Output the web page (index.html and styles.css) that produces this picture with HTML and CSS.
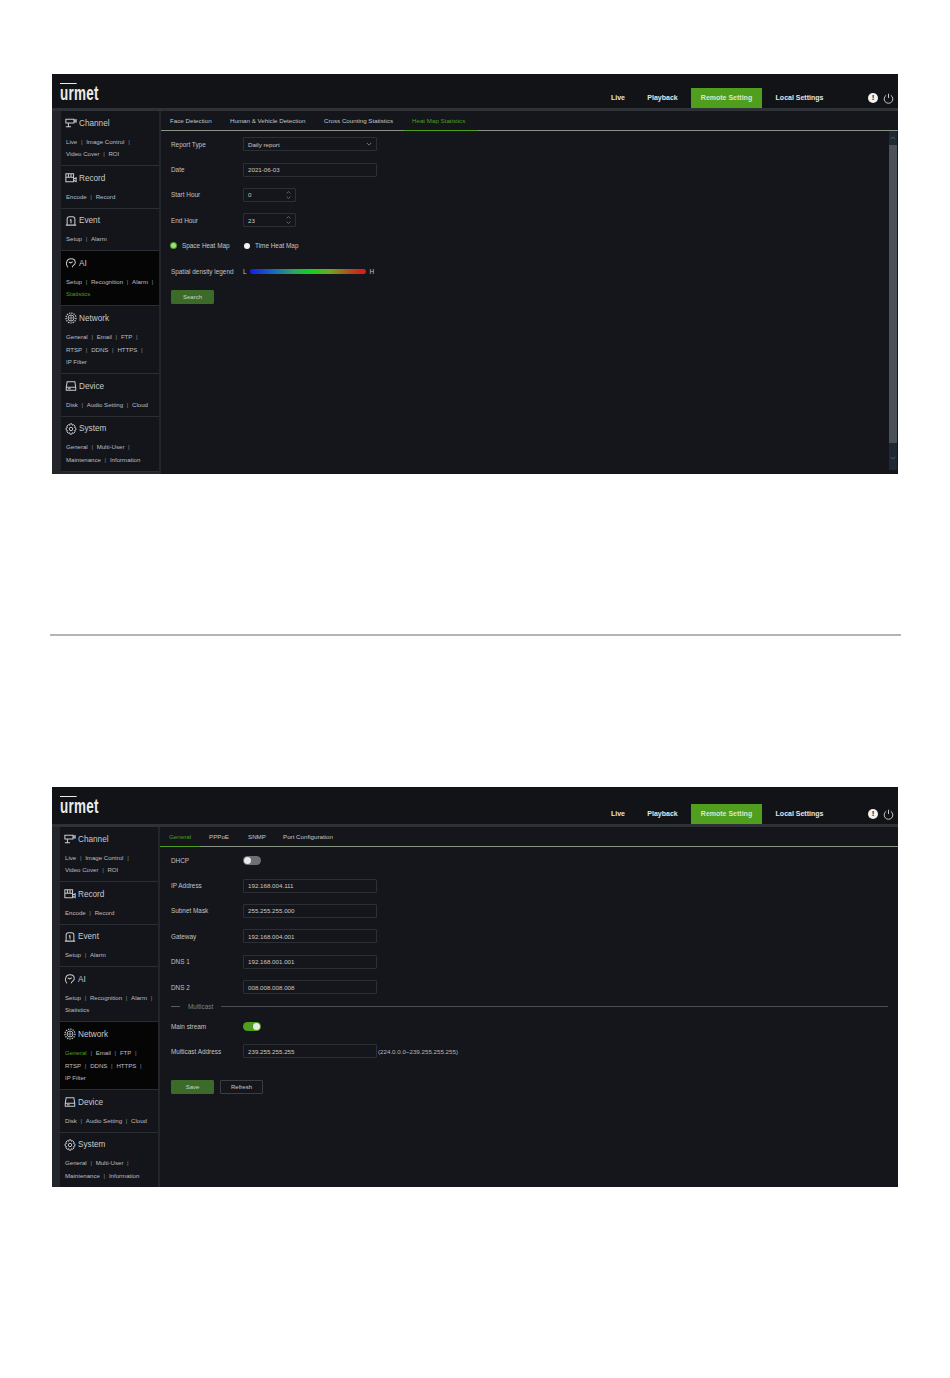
FILE: index.html
```html
<!DOCTYPE html>
<html lang="en">
<head>
<meta charset="utf-8">
<title>Urmet</title>
<link rel="stylesheet" href="styles.css">
</head>
<body>
<svg class="defs" width="0" height="0">
  <defs>
    <symbol id="i-channel" viewBox="0 0 14 12"><path d="M1 1.500h9.500v4.500H1zM10.500 3l2.500-.8v2.800l-2.500-.8M4 6v4.500M1 10.500h6" fill="none" stroke="currentColor" stroke-width="1.200"/></symbol>
    <symbol id="i-record" viewBox="0 0 14 12"><path d="M1 1h9v9.500H1zM1 5.200h9M4 1v4.200M7 1v4.200M10 7.200l3-1.500v4.500l-3-1.500" fill="none" stroke="currentColor" stroke-width="1.200"/></symbol>
    <symbol id="i-event" viewBox="0 0 14 12"><path d="M2.500 10.800V3.500C2.500 2 3.500 1 5 1h4c1.500 0 2.500 1 2.500 2.500v7.300M1 10.800h12M7 4v4.500M5.800 5.200 7 4" fill="none" stroke="currentColor" stroke-width="1.200"/></symbol>
    <symbol id="i-ai" viewBox="0 0 14 12"><path d="M3.500 11C2 9.500 1.300 7.500 1.800 5.500 2.200 2.800 4.200 1 7 1c2.800 0 5 1.800 5 4.500 0 2.500-2 3-3 4l-.5 1.500M4.500 4.800l2 1.200 2.500-1.500" fill="none" stroke="currentColor" stroke-width="1.200"/></symbol>
    <symbol id="i-network" viewBox="0 0 14 14"><circle cx="7" cy="7" r="3.500" fill="none" stroke="currentColor"/><circle cx="7" cy="7" r="5.800" fill="none" stroke="currentColor" stroke-width="1.500" stroke-dasharray="1.500 1.200"/><path d="M3.500 7h7M7 3.500v7" stroke="currentColor" stroke-width=".8"/></symbol>
    <symbol id="i-device" viewBox="0 0 14 12"><path d="M2.500 1h9l1 6.500V11h-11V7.500zM1.500 7.500h11M3.500 9.300h3" fill="none" stroke="currentColor" stroke-width="1.200"/></symbol>
    <symbol id="i-system" viewBox="0 0 14 14"><circle cx="7" cy="7" r="2" fill="none" stroke="currentColor" stroke-width="1.100"/><path d="M5.800 1h2.400l.4 1.700 1.600-.7 1.600 1.700-.8 1.500 1.700.6v2.400l-1.700.6.800 1.500-1.600 1.700-1.600-.7-.4 1.700H5.800l-.4-1.700-1.600.7-1.600-1.700.8-1.500L1.300 8.200V5.800L3 5.200 2.200 3.700 3.800 2l1.600.7z" fill="none" stroke="currentColor" stroke-width="1.100"/></symbol>
    <symbol id="i-up" viewBox="0 0 8 5"><path d="M1 4l3-3 3 3" fill="none" stroke="currentColor"/></symbol>
    <symbol id="i-down" viewBox="0 0 8 5"><path d="M1 1l3 3 3-3" fill="none" stroke="currentColor"/></symbol>
  </defs>
</svg>

<section class="shot shot-heat">
  <header class="top">
    <div class="logo"><span class="logo-text">urmet</span></div>
    <nav class="nav">
      <a class="nav-live">Live</a><a class="nav-play">Playback</a><a class="nav-on">Remote Setting</a><a class="nav-local">Local Settings</a>
    </nav>
    <div class="top-icons">
      <span class="info">!</span>
      <svg class="power" viewBox="0 0 12 12"><path d="M3.500 2.500a4.700 4.700 0 1 0 5 0M6 .8v4.700" fill="none" stroke="currentColor"/></svg>
    </div>
  </header>
  <div class="strip"></div>
  <div class="body">
    <aside class="side">
      <div class="sec"><div class="sec-title"><svg class="sec-icon"><use href="#i-channel"/></svg>Channel</div><div class="line">Live<i>|</i>Image Control<i>|</i></div><div class="line">Video Cover<i>|</i>ROI</div></div>
      <div class="sec"><div class="sec-title"><svg class="sec-icon"><use href="#i-record"/></svg>Record</div><div class="line">Encode<i>|</i>Record</div></div>
      <div class="sec"><div class="sec-title"><svg class="sec-icon"><use href="#i-event"/></svg>Event</div><div class="line">Setup<i>|</i>Alarm</div></div>
      <div class="sec sec-on"><div class="sec-title"><svg class="sec-icon"><use href="#i-ai"/></svg>AI</div><div class="line">Setup<i>|</i>Recognition<i>|</i>Alarm<i>|</i></div><div class="line"><b class="green">Statistics</b></div></div>
      <div class="sec"><div class="sec-title"><svg class="sec-icon"><use href="#i-network"/></svg>Network</div><div class="line">General<i>|</i>Email<i>|</i>FTP<i>|</i></div><div class="line">RTSP<i>|</i>DDNS<i>|</i>HTTPS<i>|</i></div><div class="line">IP Filter</div></div>
      <div class="sec"><div class="sec-title"><svg class="sec-icon"><use href="#i-device"/></svg>Device</div><div class="line">Disk<i>|</i>Audio Setting<i>|</i>Cloud</div></div>
      <div class="sec"><div class="sec-title"><svg class="sec-icon"><use href="#i-system"/></svg>System</div><div class="line">General<i>|</i>Multi-User<i>|</i></div><div class="line">Maintenance<i>|</i>Information</div></div>
    </aside>
    <main class="main">
      <div class="tabs">
        <a class="tab tab-face">Face Detection</a><a class="tab tab-human">Human &amp; Vehicle Detection</a><a class="tab tab-cross">Cross Counting Statistics</a><a class="tab tab-heat tab-on">Heat Map Statistics</a>
      </div>
      <div class="pane">
        <div class="form">
          <div class="row"><label class="lab">Report Type</label><div class="field">Daily report<svg class="caret"><use href="#i-down"/></svg></div></div>
          <div class="row"><label class="lab">Date</label><div class="field">2021-06-03</div></div>
          <div class="row"><label class="lab">Start Hour</label><div class="field field-num">0<span class="spin"><svg><use href="#i-up"/></svg><svg><use href="#i-down"/></svg></span></div></div>
          <div class="row"><label class="lab">End Hour</label><div class="field field-num">23<span class="spin"><svg><use href="#i-up"/></svg><svg><use href="#i-down"/></svg></span></div></div>
          <div class="row"><div class="radio-a"><span class="radio radio-on"></span>Space Heat Map</div><div class="radio-b"><span class="radio"></span>Time Heat Map</div></div>
          <div class="row"><label class="lab">Spatial density legend</label><div class="legend"><span>L</span><span class="ramp"></span><span>H</span></div></div>
          <div class="row"><button class="btn btn-go">Search</button></div>
        </div>
        <div class="scroll"><svg class="scroll-arrow"><use href="#i-up"/></svg><span class="thumb"></span><svg class="scroll-arrow scroll-arrow-end"><use href="#i-down"/></svg></div>
      </div>
    </main>
  </div>
</section>

<hr class="rule">

<section class="shot shot-net">
  <header class="top">
    <div class="logo"><span class="logo-text">urmet</span></div>
    <nav class="nav">
      <a class="nav-live">Live</a><a class="nav-play">Playback</a><a class="nav-on">Remote Setting</a><a class="nav-local">Local Settings</a>
    </nav>
    <div class="top-icons">
      <span class="info">!</span>
      <svg class="power" viewBox="0 0 12 12"><path d="M3.500 2.500a4.700 4.700 0 1 0 5 0M6 .8v4.700" fill="none" stroke="currentColor"/></svg>
    </div>
  </header>
  <div class="strip"></div>
  <div class="body">
    <aside class="side">
      <div class="sec"><div class="sec-title"><svg class="sec-icon"><use href="#i-channel"/></svg>Channel</div><div class="line">Live<i>|</i>Image Control<i>|</i></div><div class="line">Video Cover<i>|</i>ROI</div></div>
      <div class="sec"><div class="sec-title"><svg class="sec-icon"><use href="#i-record"/></svg>Record</div><div class="line">Encode<i>|</i>Record</div></div>
      <div class="sec"><div class="sec-title"><svg class="sec-icon"><use href="#i-event"/></svg>Event</div><div class="line">Setup<i>|</i>Alarm</div></div>
      <div class="sec"><div class="sec-title"><svg class="sec-icon"><use href="#i-ai"/></svg>AI</div><div class="line">Setup<i>|</i>Recognition<i>|</i>Alarm<i>|</i></div><div class="line">Statistics</div></div>
      <div class="sec sec-on"><div class="sec-title"><svg class="sec-icon"><use href="#i-network"/></svg>Network</div><div class="line"><b class="green">General</b><i>|</i>Email<i>|</i>FTP<i>|</i></div><div class="line">RTSP<i>|</i>DDNS<i>|</i>HTTPS<i>|</i></div><div class="line">IP Filter</div></div>
      <div class="sec"><div class="sec-title"><svg class="sec-icon"><use href="#i-device"/></svg>Device</div><div class="line">Disk<i>|</i>Audio Setting<i>|</i>Cloud</div></div>
      <div class="sec"><div class="sec-title"><svg class="sec-icon"><use href="#i-system"/></svg>System</div><div class="line">General<i>|</i>Multi-User<i>|</i></div><div class="line">Maintenance<i>|</i>Information</div></div>
    </aside>
    <main class="main">
      <div class="tabs">
        <a class="tab tab-gen tab-on">General</a><a class="tab tab-ppp">PPPoE</a><a class="tab tab-snmp">SNMP</a><a class="tab tab-port">Port Configuration</a>
      </div>
      <div class="form">
        <div class="row"><label class="lab">DHCP</label><span class="toggle"></span></div>
        <div class="row"><label class="lab">IP Address</label><div class="field">192.168.004.111</div></div>
        <div class="row"><label class="lab">Subnet Mask</label><div class="field">255.255.255.000</div></div>
        <div class="row"><label class="lab">Gateway</label><div class="field">192.168.004.001</div></div>
        <div class="row"><label class="lab">DNS 1</label><div class="field">192.168.001.001</div></div>
        <div class="row"><label class="lab">DNS 2</label><div class="field">008.008.008.008</div></div>
        <div class="group"><span class="group-dash"></span><span class="group-name">Multicast</span><span class="group-line"></span></div>
        <div class="row"><label class="lab">Main stream</label><span class="toggle toggle-on"></span></div>
        <div class="row"><label class="lab">Multicast Address</label><div class="field">239.255.255.255</div><span class="hint">(224.0.0.0~239.255.255.255)</span></div>
        <div class="actions"><button class="btn btn-go">Save</button><button class="btn">Refresh</button></div>
      </div>
    </main>
  </div>
</section>
</body>
</html>
```

FILE: styles.css
```css
* { box-sizing: border-box; }
html, body { margin: 0; padding: 0; background: #fff; }
body { height: 1378px; overflow: hidden; font-family: "Liberation Sans", Arial, sans-serif; }
.defs { position: absolute; }

.shot {
  width: 846px;
  height: 400px;
  margin-left: 52px;
  background: #14161b;
  color: #c4c6c8;
  font-size: 6px;
  overflow: hidden;
}
.shot-heat { margin-top: 74px; }
.shot-net { margin-top: 151px; }

.rule {
  width: 851px;
  height: 2px;
  margin: 160px 0 0 50px;
  border: 0;
  background: #b4b4b4;
}

.top { height: 34px; display: flex; align-items: flex-end; background: #111317; position: relative; }
.shot-net .top { height: 37px; }
.logo { width: 559px; align-self: flex-start; padding: 10px 0 0 8px; }
.logo-text {
  display: inline-block;
  position: relative;
  font-size: 21px;
  line-height: 17px;
  font-weight: 700;
  color: #ececec;
  transform: scaleX(.64);
  transform-origin: 0 0;
  letter-spacing: .4px;
}
.logo-text::before {
  content: "";
  position: absolute;
  left: 0;
  top: -1px;
  width: 26px;
  height: 1px;
  background: #ececec;
}
.nav { display: flex; align-items: stretch; height: 20px; font-size: 7px; font-weight: 700; color: #e6e6e6; }
.nav a { display: flex; align-items: center; justify-content: center; white-space: nowrap; padding-bottom: 1px; }
.shot-net .nav a { padding-bottom: 2px; }
.nav-live { width: 14px; }
.nav-play { width: 31px; margin-left: 22px; }
.nav-on { width: 71px; margin-left: 13px; background: #4f9e1e; color: #d9e8cf; }
.nav-local { width: 49px; margin-left: 13px; }
.top-icons { height: 20px; margin-left: 44px; display: flex; align-items: center; gap: 5px; color: #d8d8d8; }
.info {
  width: 10px; height: 10px; border-radius: 50%;
  background: #f2f2f2; color: #14161b;
  font-size: 8px; font-weight: 700; line-height: 10px; text-align: center;
}
.power { width: 11px; height: 11px; }

.strip { height: 3px; background: #2e3136; }

.body { display: flex; height: 363px; }
.shot-net .body { height: 360px; }
.side { width: 109px; padding: 0 0 0 9px; background: #22252a; flex: none; border-right: 2px solid #22252a; }
.shot-net .side { width: 108px; padding-left: 8px; }
.sec { padding: 4px 0 4.200px 5px; background: #13151a; border-bottom: 1px solid #2a2d32; }
.sec-on { background: #050506; }
.sec-title { height: 16px; display: flex; align-items: center; gap: 2px; font-size: 8.200px; color: #c8cacc; margin-bottom: 4.600px; }
.sec-icon { width: 12px; height: 12px; flex: none; margin-left: -1px; }
.line { height: 12.700px; line-height: 12.700px; font-size: 6.100px; white-space: nowrap; color: #bcbec0; }
.line i { font-style: normal; margin: 0 3.700px; color: #8a8c8e; }
.green { font-weight: 400; color: #4f9e1e; }

.main { flex: 1; min-width: 0; display: flex; flex-direction: column; }
.tabs { height: 20px; display: flex; align-items: center; border-bottom: 1px solid #8a9484; position: relative; font-size: 6.200px; flex: none; }
.tab { display: block; white-space: nowrap; }
.tab-face { margin-left: 9px; width: 60px; }
.tab-human { width: 94px; }
.tab-cross { width: 88px; }
.tab-heat { width: 64px; }
.tab-gen { margin-left: 9px; width: 40px; }
.tab-ppp { width: 39px; }
.tab-snmp { width: 35px; }
.tab-port { width: 60px; }
.tab-on { color: #4f9e1e; position: relative; }
.tab-on::after { content: ""; position: absolute; left: -9px; right: 9px; top: 12.500px; height: 1px; background: #4f9e1e; }
.tab-heat::after { left: -8px; right: -2px; }

.pane { flex: 1; display: flex; min-height: 0; }
.form { flex: 1; padding: .5px 0 0 10px; font-size: 6.400px; }
.shot-net .form { padding-left: 11px; }
.row { height: 25.400px; display: flex; align-items: center; }
.lab { width: 72px; flex: none; color: #c0c2c4; }
.field {
  width: 134px; height: 14px; padding-left: 4px;
  display: flex; align-items: center; justify-content: space-between;
  border: 1px solid #2c2f34; border-radius: 1px; color: #c8cacc; background: #14161b;
  font-size: 6.200px;
}
.field-num { width: 53px; }
.caret { width: 6px; height: 4px; margin-right: 4px; color: #999; }
.spin { display: flex; flex-direction: column; gap: 2px; margin-right: 4px; color: #999; }
.spin svg { display: block; width: 5px; height: 3px; }

.radio-a { width: 73px; display: flex; align-items: center; gap: 6px; }
.radio-b { display: flex; align-items: center; gap: 5px; }
.radio { width: 6px; height: 6px; border-radius: 50%; background: #f4f4f4; }
.radio-on { background: #a6d88a; box-shadow: 0 0 0 1px #4f9e1e; width: 5px; height: 5px; }
.legend { display: flex; align-items: center; gap: 3.500px; width: 132px; }
.ramp {
  width: 116px; height: 5px; border-radius: 3px;
  background: linear-gradient(90deg, #1220e8 0%, #1c6fb0 22%, #2aa860 38%, #10d020 52%, #6caa20 68%, #c03020 92%, #e01818 100%);
}
.scroll { width: 8px; height: 339px; margin-right: 1px; flex: none; display: flex; flex-direction: column; align-items: center; background: #1d2a33; color: #667; }
.scroll-arrow { width: 6px; height: 14px; flex: none; }
.scroll-arrow-end { margin-top: 8px; }
.thumb { height: 298px; flex: none; width: 8px; background: #4b5158; }

.btn {
  width: 43px; height: 14px; padding: 0;
  font: 6px "Liberation Sans", Arial, sans-serif;
  color: #c8cacc; background: #14161b; border: 1px solid #3a3d42; border-radius: 1px;
}
.btn-go { background: #3c6a28; border-color: #3c6a28; color: #c9d8c0; }

.toggle { width: 18px; height: 9px; border-radius: 5px; background: #6c6f74; position: relative; }
.toggle::after { content: ""; position: absolute; left: 1px; top: 1px; width: 7px; height: 7px; border-radius: 50%; background: #e8e8e8; }
.toggle-on { background: #4f9e1e; }
.toggle-on::after { left: auto; right: 1px; }
.hint { margin-left: 1px; white-space: nowrap; font-size: 6.200px; color: #b4b6b8; }

.group { height: 13.500px; margin-right: 10px; display: flex; align-items: center; gap: 8px; color: #7e8184; }
.group-dash { width: 9px; height: 1px; background: #5a5d60; }
.group-line { flex: 1; height: 1px; background: #4a4d50; }
.actions { display: flex; gap: 6px; margin-top: 16px; }
```
